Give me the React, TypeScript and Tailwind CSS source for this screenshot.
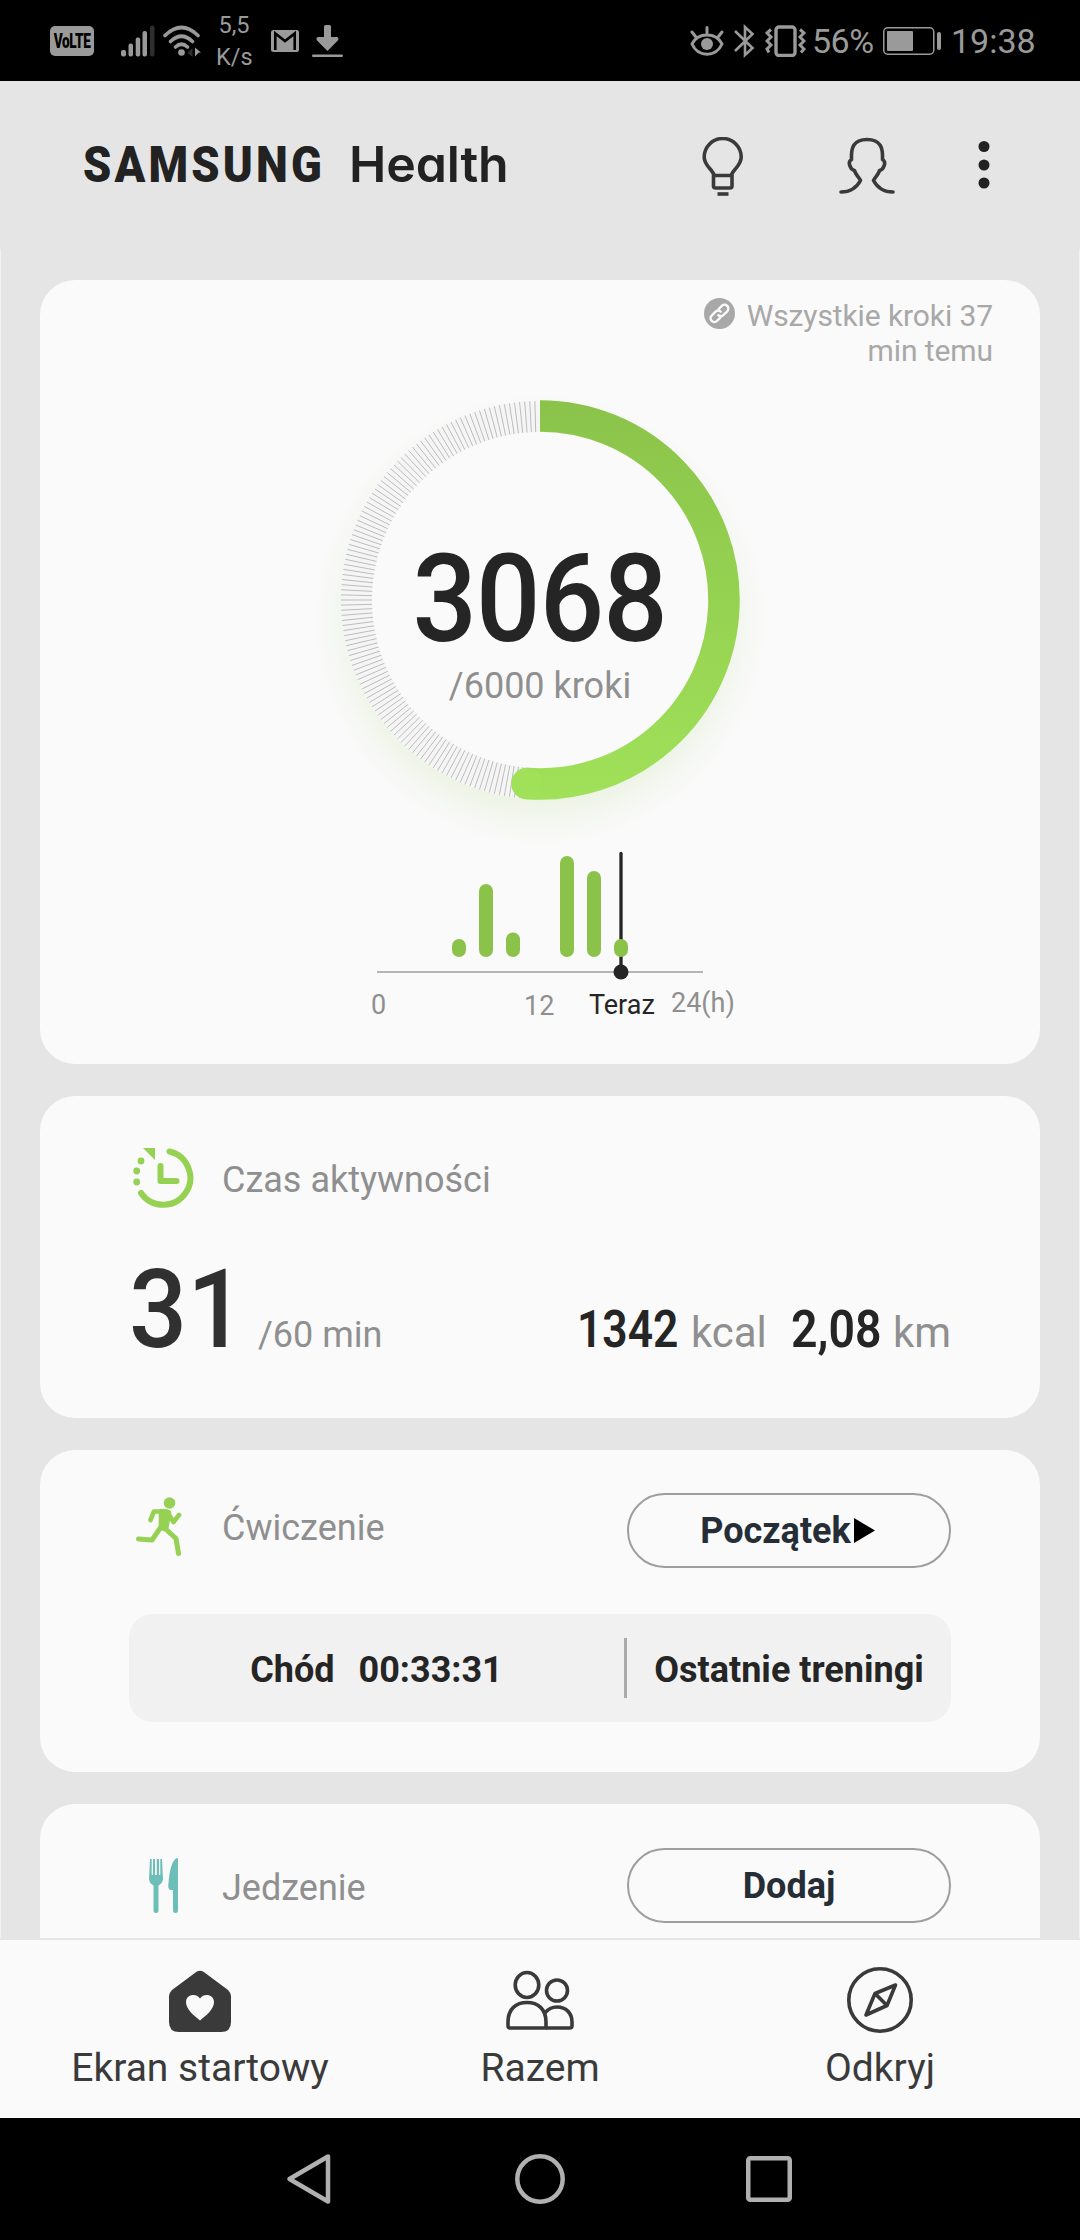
import type { ReactNode } from "react";

const hourBars = [
  { x: 112, y: 99, h: 18 },
  { x: 139, y: 44, h: 73 },
  { x: 166, y: 92.5, h: 24.5 },
  { x: 220, y: 16, h: 101 },
  { x: 247, y: 31, h: 86 },
];

const TICKS = 244;
const STEPS = 3068;
const GOAL = 6000;

// Point on the ring, angle in degrees clockwise from 12 o'clock
function polar(r: number, deg: number) {
  const a = ((deg - 90) * Math.PI) / 180;
  return { x: 240 + r * Math.cos(a), y: 240 + r * Math.sin(a) };
}

function StatusBar() {
  return (
    <div className="flex h-[81px] items-center bg-black pl-[50px] pr-[46px] text-[#9a9a9a]">
      {/* VoLTE */}
      <div className="flex h-[30px] w-[44px] items-center justify-center rounded-[5px] bg-[#9a9a9a]">
        <span className="inline-block scale-x-[0.68] text-[20px] font-black leading-none tracking-[-0.5px] text-black">VoLTE</span>
      </div>
      {/* signal */}
      <svg className="ml-[27px]" width="34" height="32" viewBox="0 0 34 32" fill="#9a9a9a">
        <rect x="0" y="25" width="5" height="6.5" rx="2" />
        <rect x="7.5" y="18.5" width="4.5" height="13" rx="2" />
        <rect x="14.7" y="12.5" width="4.5" height="19" rx="2" />
        <rect x="21.5" y="6" width="4.5" height="25.5" rx="2" />
        <rect x="29" y="0.5" width="4.5" height="31" rx="2" fill="#2e2e2e" />
      </svg>
      {/* wifi */}
      <svg className="ml-[8px]" width="39" height="32" viewBox="0 0 39 32" fill="none" stroke="#9a9a9a" strokeWidth="3.6" strokeLinecap="round">
        <path d="M2 10.5 Q18.5 -5.5 35 10.5" />
        <path d="M7.5 16.5 Q18.5 6 29.5 16.5" />
        <path d="M12.5 22 Q18.5 16.5 24.5 22" />
        <circle cx="18.5" cy="27.5" r="3.3" fill="#9a9a9a" stroke="none" />
        <path d="M29.5 23 v9 L24.5 28z" fill="#2e2e2e" stroke="none" />
        <path d="M32 22.5 l6 5 h-2 l-4 4z" fill="#9a9a9a" stroke="none" />
      </svg>
      <div className="ml-[14px] mt-[1px] w-[36px] text-center text-[23.5px] leading-[32px]">5,5 K/s</div>
      {/* gmail */}
      <svg className="ml-[19px] mt-[1px]" width="28" height="22" viewBox="0 0 28 22">
        <rect width="28" height="22" rx="2.5" fill="#9a9a9a" />
        <path d="M4.3 20 V3.5 L14 11 L23.7 3.5 V20" fill="none" stroke="#000" strokeWidth="2.6" />
      </svg>
      {/* download */}
      <svg className="ml-[13px] mt-[1px]" width="31" height="32" viewBox="0 0 31 32" fill="#9a9a9a">
        <path d="M12 1.5 q0 -1.5 1.5 -1.5 h4 q1.5 0 1.5 1.5 V12 h6 q2.5 1 0.8 3.5 L15.5 26 L5 15.5 q-1.5 -2.5 1 -3.5 H12z" />
        <rect x="0" y="29.5" width="31" height="2.5" rx="1.2" />
      </svg>

      <div className="ml-auto flex items-center">
        {/* eye comfort */}
        <svg width="34" height="32" viewBox="0 0 34 32" fill="none" stroke="#9a9a9a" strokeWidth="3" strokeLinecap="round">
          <path d="M2 19 C8 7 26 7 32 19 C26 32.5 8 32.5 2 19z" />
          <circle cx="17" cy="19" r="6" fill="#9a9a9a" stroke="none" />
          <path d="M17 2.5 V8 M2 7 L5.5 11.5 M32 7 L28.5 11.5" />
        </svg>
        {/* bluetooth */}
        <svg className="ml-[10px]" width="21" height="34" viewBox="0 0 21 34" fill="none" stroke="#9a9a9a" strokeWidth="2.6">
          <path d="M1 7 L18.5 24 L11 31 V3 L18.5 10 L1 27" />
        </svg>
        {/* vibrate */}
        <svg className="ml-[10px]" width="41" height="32" viewBox="0 0 41 32" fill="none" stroke="#9a9a9a" strokeWidth="3.4">
          <rect x="11" y="2" width="19" height="28.5" rx="3" />
          <path d="M6 4.5 L2 8 L6 12 L2 16 L6 20 L2 24 L4 27.5 M35 4.5 L39 8 L35 12 L39 16 L35 20 L39 24 L36 27.5" strokeWidth="3" />
        </svg>
        <span className="ml-[6px] w-[62px] whitespace-nowrap text-[34px] leading-none tracking-[-0.5px]">56%</span>
        {/* battery */}
        <svg className="ml-[9px]" width="58" height="28" viewBox="0 0 58 28" fill="#9a9a9a">
          <rect x="0.75" y="0.75" width="50" height="26.5" rx="4" fill="none" stroke="#9a9a9a" strokeWidth="1.5" />
          <rect x="4" y="4" width="26" height="20" rx="1" />
          <rect x="54" y="5" width="4" height="18" rx="2" />
        </svg>
        <span className="ml-[10px] w-[83px] whitespace-nowrap text-[34px] leading-none">19:38</span>
      </div>
    </div>
  );
}

function Header() {
  return (
    <header className="flex h-[168px] items-center pl-[83px] pr-[90px] text-[#222]">
      <div className="-mt-[2px] flex w-[440px] items-baseline">
        <span className="w-[266px]">
          <span className="inline-block origin-left scale-x-[0.905] text-[50px] font-black leading-none tracking-[3.5px]">SAMSUNG</span>
        </span>
        <span className="font-['Inter'] text-[50px] font-semibold leading-none tracking-[-0.1px] [font-feature-settings:'cv11']">Health</span>
      </div>
      {/* tips */}
      <svg className="ml-auto mt-[3px]" width="42" height="60" viewBox="0 0 42 60" fill="none" stroke="#3a3a3a" strokeWidth="3.6" strokeLinejoin="round">
        <path d="M12.2 38.5 C10.5 32 2.2 29 2.2 20 A18.5 18.5 0 0 1 39.2 20 C39.2 29 31 32 29.2 38.5" />
        <path d="M11.5 38.5 H30 V49 Q30 51 28 51 H13.5 Q11.5 51 11.5 49z" />
        <path d="M15.5 57 H26.5" />
      </svg>
      {/* profile */}
      <svg className="ml-[94px] mt-[1px]" width="58" height="60" viewBox="0 0 58 60" fill="none" stroke="#3a3a3a" strokeWidth="3.6" strokeLinecap="round" strokeLinejoin="round">
        <path d="M3 56 C13 56 19 51 22.5 44.5 C21 41 17.5 39 16.5 34.5 C12.5 33.5 9 26 13.5 23.5 C13 12 15 3.5 29 3.5 C43 3.5 45 12 44.5 23.5 C49 26 45.5 33.5 41.5 34.5 C40.5 39 37 41 35.5 44.5 C39 51 45 56 55 56" />
      </svg>
      <svg className="ml-[82px]" width="12" height="50" viewBox="0 0 12 50" fill="#222">
        <circle cx="6" cy="6.5" r="5.5" />
        <circle cx="6" cy="25" r="5.5" />
        <circle cx="6" cy="43" r="5.5" />
      </svg>
    </header>
  );
}

function StepsRing() {
  const end = (STEPS / GOAL) * 360;
  const p = polar(184, end);
  const ticks = Array.from({ length: TICKS }, (_, i) => (i * 360) / TICKS).filter(d => d > end);

  return (
    <div className="-mt-2 grid justify-items-center">
      <svg className="col-start-1 row-start-1 overflow-visible" width="480" height="480" viewBox="0 0 480 480">
        <defs>
          <linearGradient id="ring" gradientUnits="userSpaceOnUse" x1="0" y1="40" x2="0" y2="440">
            <stop offset="0" stopColor="#8bc34a" />
            <stop offset="1" stopColor="#a0e159" />
          </linearGradient>
          <radialGradient id="glow" gradientUnits="userSpaceOnUse" cx="240" cy="260" r="228">
            <stop offset="0.7" stopColor="#8bc34a" stopOpacity="0.18" />
            <stop offset="0.82" stopColor="#8bc34a" stopOpacity="0.1" />
            <stop offset="0.92" stopColor="#8bc34a" stopOpacity="0.03" />
            <stop offset="1" stopColor="#8bc34a" stopOpacity="0" />
          </radialGradient>
        </defs>
        <circle cx="240" cy="260" r="228" fill="url(#glow)" />
        <circle cx="240" cy="240" r="199" fill="#fafafa" />
        <circle cx="240" cy="240" r="183.5" fill="none" stroke="#f5f5f5" strokeWidth="31" />
        {ticks.map(d => {
          const a = polar(168, d);
          const b = polar(199, d);
          return <line key={d} x1={a.x} y1={a.y} x2={b.x} y2={b.y} stroke="#bdbdbd" strokeWidth="1" />;
        })}
        <path d={`M240 56 A184 184 0 1 1 ${p.x} ${p.y}`} fill="none" stroke="url(#ring)" strokeWidth="31.5" />
        <circle cx={p.x} cy={p.y} r="15.75" fill="#a0e159" />
      </svg>
      <div className="col-start-1 row-start-1 flex flex-col items-center pt-[179px]">
        <span className="inline-block scale-x-[0.93] text-[122px] font-medium leading-[122px] tracking-[-1px] text-[#252525]">{STEPS}</span>
        <span className="mt-[7px] text-[36px] leading-[36px] text-[#8f8f8f]">{`/${GOAL} kroki`}</span>
      </div>
    </div>
  );
}

function DayChart() {
  return (
    <svg className="mx-auto" width="400" height="200" viewBox="0 0 400 200" fontSize="27">
      {hourBars.map(b => (
        <rect key={b.x} x={b.x} y={b.y} width="14" height={b.h} rx="7" fill="#8bc34a" />
      ))}
      <line x1="37" y1="132" x2="363" y2="132" stroke="#b5b5b5" strokeWidth="2" />
      <line x1="281" y1="13.5" x2="281" y2="132" stroke="#252525" strokeWidth="3.3" strokeLinecap="round" />
      <circle cx="281" cy="132" r="7.5" fill="#252525" />
      <rect x="274" y="99" width="14" height="18" rx="7" fill="#8bc34a" />
      <g fill="#8f8f8f">
        <text x="31" y="174">0</text>
        <text x="184" y="175">12</text>
        <text x="331" y="172">24(h)</text>
      </g>
      <text x="249" y="174" fill="#252525">Teraz</text>
    </svg>
  );
}

function CardTitle({ icon, label, children }: { icon: ReactNode; label: string; children?: ReactNode }) {
  return (
    <div className="flex items-center">
      <div className="w-[93px]">{icon}</div>
      <span className="text-[36px] leading-[36px] text-[#8f8f8f]">{label}</span>
      {children}
    </div>
  );
}

function PillButton({ children }: { children: ReactNode }) {
  return (
    <button className="ml-auto flex h-[75px] w-[324px] items-center justify-center rounded-full border-2 border-[#9e9e9e] text-[36px] font-bold leading-none text-[#252d36]">
      {children}
    </button>
  );
}

function ClockIcon() {
  return (
    <svg className="mb-1 ml-1" width="62" height="60" viewBox="0 0 62 60" fill="none" stroke="#95d152" strokeWidth="6" strokeLinecap="round" strokeLinejoin="round">
      <path d="M36.5 3.5 A27 27 0 1 1 8 45" />
      <path d="M27.5 18 V33 H43.5" />
      <g fill="#95d152" stroke="none">
        <path d="M10 0 H22 V12z" />
        <circle cx="8" cy="13" r="3.4" />
        <circle cx="3.7" cy="23" r="3.4" />
        <circle cx="3.7" cy="34" r="3.4" />
      </g>
    </svg>
  );
}

function RunnerIcon() {
  return (
    <svg className="mb-[7px] ml-[7px]" width="46" height="60" viewBox="0 0 46 60" fill="none" stroke="#95d152" strokeWidth="4.6" strokeLinecap="round" strokeLinejoin="round">
      <circle cx="33.5" cy="6" r="5.8" fill="#95d152" stroke="none" />
      <path d="M14.5 23 L18 14.5 H31 L37.5 25 L43 18" />
      <path d="M25 14 L33 15.5 L30 32 L25 31z" fill="#95d152" />
      <path d="M25 30 L16 43 L2.5 42" strokeWidth="5" />
      <path d="M28.5 31 L40 41.5 L42.5 56.5" strokeWidth="5" />
    </svg>
  );
}

function FoodIcon() {
  return (
    <svg className="ml-[20px]" width="30" height="56" viewBox="0 0 30 56" fill="#6bbfb8">
      <path d="M1 1 H2.7 V17 H4 V1 H6 V17 H7.8 V1 H10 V17 H11.3 V1 H13 L14 21 Q13.5 25.5 9.5 27.5 V52.5 Q9.5 55 7 55 Q4.5 55 4.5 52.5 V27.5 Q0.5 25.5 0 21z" />
      <path d="M29 0 V52.5 Q29 55 26.5 55 Q24 55 24 52.5 V32 H21.5 Q18.5 31 19.5 25 Q21 5 27 0.5z" />
    </svg>
  );
}

function BottomNav() {
  const tabs = [
    {
      label: "Ekran startowy",
      icon: (
        <svg width="68" height="66" viewBox="0 0 68 66">
          <path d="M30.5 4.8 Q34 2.5 37.5 4.8 L62 23 Q65 26 65 29 V55 Q65 65 55 65 H13 Q3 65 3 55 V29 Q3 26 6 23z" fill="#3a3a3a" />
          <path d="M34 53.5 C28 48.5 20 42.5 20 35 C20 27.5 30 25.5 34 31.5 C38 25.5 48 27.5 48 35 C48 42.5 40 48.5 34 53.5z" fill="#fafafa" />
        </svg>
      ),
    },
    {
      label: "Razem",
      icon: (
        <svg width="68" height="66" viewBox="0 0 68 66" fill="none" stroke="#3a3a3a" strokeWidth="3.6" strokeLinejoin="round">
          <ellipse cx="21" cy="18" rx="11.8" ry="12.5" />
          <ellipse cx="51" cy="23.5" rx="10.5" ry="10.5" />
          <path d="M2 59 V55 C2 42 10 35.5 21 35.5 C32 35.5 40 42 40 55 V61 H4.5 Q2 61 2 59z" />
          <path d="M39 46 C42 42 46 40 51 40 C60 40 66 46 66 55 V59 Q66 61 63.5 61 H40" />
        </svg>
      ),
    },
    {
      label: "Odkryj",
      icon: (
        <svg width="68" height="66" viewBox="0 0 68 66" fill="none" stroke="#3a3a3a" strokeWidth="3.6" strokeLinejoin="round">
          <circle cx="34" cy="33" r="31.2" />
          <path d="M49.5 18 L29 26.5 L20 48 L41 38.5z M29 26.5 L41 38.5" />
        </svg>
      ),
    },
  ];

  return (
    <nav className="flex h-[180px] border-t-2 border-[#e5e5e5] bg-[#fafafa] px-[30px] pt-[27px]">
      {tabs.map(t => (
        <div key={t.label} className="flex flex-1 flex-col items-center gap-4 text-[#3a3a3a]">
          {t.icon}
          <span className="whitespace-nowrap text-[39px] leading-[39px]">{t.label}</span>
        </div>
      ))}
    </nav>
  );
}

function SystemNav() {
  return (
    <div className="flex h-[122px] items-center bg-black pl-[285px]">
      <svg width="48" height="52" viewBox="0 0 48 52" fill="none" stroke="#b0b0b0" strokeWidth="4.5" strokeLinejoin="round">
        <path d="M43 3.5 V48.5 L4.5 26z" />
      </svg>
      <svg className="ml-[182px]" width="50" height="50" viewBox="0 0 50 50" fill="none" stroke="#b0b0b0" strokeWidth="4.5">
        <circle cx="25" cy="25" r="22.7" />
      </svg>
      <svg className="ml-[181px]" width="46" height="46" viewBox="0 0 46 46" fill="none" stroke="#b0b0b0" strokeWidth="4.5">
        <rect x="2.25" y="2.25" width="41.5" height="41.5" rx="2" />
      </svg>
    </div>
  );
}

export default function App() {
  return (
    <div className="flex h-[2240px] w-[1080px] flex-col overflow-hidden bg-[#e5e5e5] font-['Roboto',sans-serif]">
      <StatusBar />
      <Header />

      <main className="flex min-h-0 flex-1 flex-col gap-8 overflow-hidden border-x border-[#f2f2f2] px-[39px] pt-[31px]">
        {/* Steps */}
        <section className="h-[784px] shrink-0 rounded-[35px] bg-[#fafafa] pt-[18px]">
          <div className="flex justify-end gap-3 pr-[47px]">
            <svg width="31" height="31" viewBox="0 0 31 31">
              <circle cx="15.5" cy="15.5" r="15.5" fill="#a8a8a8" />
              <g fill="none" stroke="#fafafa" strokeWidth="2.4" transform="rotate(-45 15.5 15.5)" strokeLinecap="round">
                <path d="M13 19 H8.5 A3.8 3.8 0 0 1 8.5 11.4 H14 A3.8 3.8 0 0 1 17.6 15" />
                <path d="M18 11.8 H22.5 A3.8 3.8 0 0 1 22.5 19.4 H17 A3.8 3.8 0 0 1 13.4 15.8" />
              </g>
            </svg>
            <p className="whitespace-nowrap text-right text-[30px] leading-[35px] tracking-[-0.1px] text-[#a8a8a8]">
              Wszystkie kroki 37<br />min temu
            </p>
          </div>
          <StepsRing />
          <DayChart />
        </section>

        {/* Active time */}
        <section className="h-[322px] shrink-0 rounded-[35px] bg-[#fafafa] px-[89px] pt-[52px]">
          <CardTitle icon={<ClockIcon />} label="Czas aktywności" />
          <div className="mt-[43px] flex items-baseline text-[#8f8f8f]">
            <span className="w-[129px]">
              <span className="inline-block origin-left scale-x-[0.93] text-[110px] font-medium leading-[110px] text-[#303030]">31</span>
            </span>
            <span className="text-[36px]">/60 min</span>
            <div className="ml-auto flex items-baseline text-[42px]">
              <span className="w-[114px]"><span className="inline-block origin-left scale-x-[0.87] text-[51px] font-semibold text-[#252525]">1342</span></span>
              <span className="w-[100px]">kcal</span>
              <span className="w-[102px]"><span className="inline-block origin-left scale-x-[0.91] text-[51px] font-semibold text-[#252525]">2,08</span></span>
              <span>km</span>
            </div>
          </div>
        </section>

        {/* Exercise */}
        <section className="h-[322px] shrink-0 rounded-[35px] bg-[#fafafa] px-[89px] pt-[43px]">
          <div className="[&>div>span]:mb-[6px]">
            <CardTitle icon={<RunnerIcon />} label="Ćwiczenie">
              <PillButton>
                <span className="-ml-[3px]">Początek</span>
                <svg className="ml-[3px]" width="21" height="25" viewBox="0 0 21 25">
                  <path d="M0 0 L21 12.5 L0 25z" fill="#000" />
                </svg>
              </PillButton>
            </CardTitle>
          </div>
          <div className="mt-[46px] flex h-[108px] items-center rounded-[24px] bg-[#f1f1f1] text-[36px] font-bold leading-none text-[#252525]">
            <div className="flex w-[495px] justify-center gap-[24px] pt-1">
              <span>Chód</span>
              <span>00:33:31</span>
            </div>
            <div className="h-[60px] w-[3px] bg-[#aaa]" />
            <span className="flex-1 whitespace-nowrap pt-1 text-center">Ostatnie treningi</span>
          </div>
        </section>

        {/* Food */}
        <section className="h-[322px] shrink-0 rounded-[35px] bg-[#fafafa] px-[89px] pt-[44px]">
          <div className="[&>div>span]:mt-1">
            <CardTitle icon={<FoodIcon />} label="Jedzenie">
              <PillButton>Dodaj</PillButton>
            </CardTitle>
          </div>
        </section>
      </main>

      <BottomNav />
      <SystemNav />
    </div>
  );
}
